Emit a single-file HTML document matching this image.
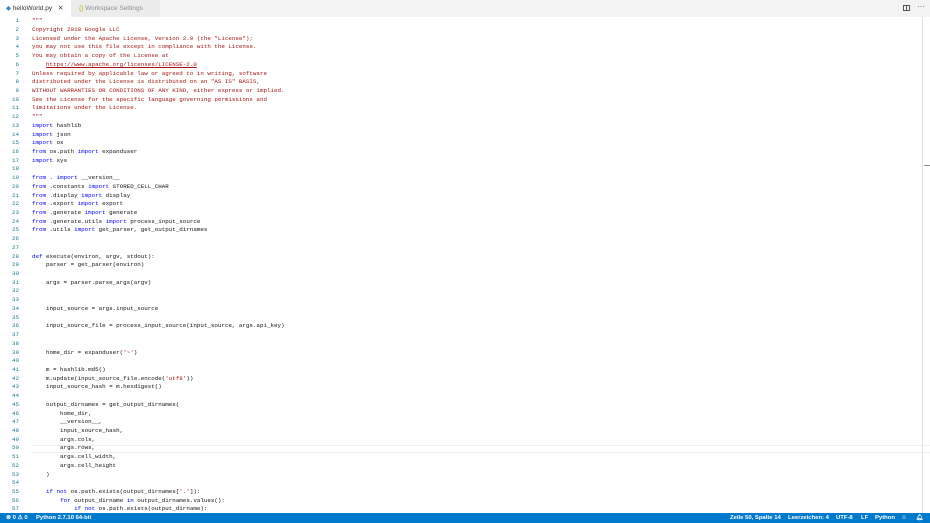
<!DOCTYPE html>
<html><head><meta charset="utf-8"><style>
*{margin:0;padding:0;box-sizing:border-box}
body{width:930px;height:523px;overflow:hidden;background:#fff;position:relative;font-family:"Liberation Sans",sans-serif}
#tabs{position:absolute;left:0;top:0;width:930px;height:17px;background:#f3f3f3}
.tab{position:absolute;top:0;height:17px;font-size:6.5px;line-height:17px}
#t1{left:0;width:71px;background:#fff;color:#333;padding-left:6px}
#t2{left:71px;width:89px;background:#ececec;color:#8e8e8e;padding-left:8px}
#ed{position:absolute;left:0;top:17.2px;font-family:"Liberation Mono",monospace;font-size:5.85px;line-height:8.73px;color:#111}
.l{height:8.73px;white-space:pre;position:relative}
.n{display:inline-block;width:19px;text-align:right;color:#237893;margin-right:13px}
.k{color:#0000ff}.s{color:#a31515}.u{color:#a31515;text-decoration:underline}
#sb{position:absolute;left:0;top:513px;width:930px;height:10px;background:#007acc;color:#fff;font-size:5.9px;line-height:10px;font-weight:bold}
</style></head><body>
<div id="tabs">
<div class="tab" id="t1"><span style="color:#3b88c3">◆</span> helloWorld.py <span style="margin-left:4px">✕</span></div>
<div class="tab" id="t2"><span style="color:#c9b400">{}</span> Workspace Settings</div>
<div style="position:absolute;left:903px;top:5px;width:7px;height:6px;border:1px solid #555;border-top-width:1.5px"></div>
<div style="position:absolute;left:906px;top:5px;width:1px;height:6px;background:#555"></div>
<div style="position:absolute;left:917px;top:2px;font-size:8px;color:#555">···</div>
</div>
<div style="position:absolute;left:922px;top:17px;width:1px;height:496px;background:#e0e0e0"></div>
<div style="position:absolute;left:924px;top:165px;width:6px;height:1px;background:#888"></div>
<div style="position:absolute;left:32px;top:444.6px;width:898px;height:8.7px;border-top:1px solid #eee;border-bottom:1px solid #eee"></div>
<div id="ed">
<div class="l"><span class="n">1</span><span class="s">"""</span></div>
<div class="l"><span class="n">2</span><span class="s">Copyright 2018 Google LLC</span></div>
<div class="l"><span class="n">3</span><span class="s">Licensed under the Apache License, Version 2.0 (the "License");</span></div>
<div class="l"><span class="n">4</span><span class="s">you may not use this file except in compliance with the License.</span></div>
<div class="l"><span class="n">5</span><span class="s">You may obtain a copy of the License at</span></div>
<div class="l"><span class="n">6</span><span class="s">    </span><span class="u">https://www.apache.org/licenses/LICENSE-2.0</span></div>
<div class="l"><span class="n">7</span><span class="s">Unless required by applicable law or agreed to in writing, software</span></div>
<div class="l"><span class="n">8</span><span class="s">distributed under the License is distributed on an "AS IS" BASIS,</span></div>
<div class="l"><span class="n">9</span><span class="s">WITHOUT WARRANTIES OR CONDITIONS OF ANY KIND, either express or implied.</span></div>
<div class="l"><span class="n">10</span><span class="s">See the License for the specific language governing permissions and</span></div>
<div class="l"><span class="n">11</span><span class="s">limitations under the License.</span></div>
<div class="l"><span class="n">12</span><span class="s">"""</span></div>
<div class="l"><span class="n">13</span><span class="k">import</span> hashlib</div>
<div class="l"><span class="n">14</span><span class="k">import</span> json</div>
<div class="l"><span class="n">15</span><span class="k">import</span> os</div>
<div class="l"><span class="n">16</span><span class="k">from</span> os.path <span class="k">import</span> expanduser</div>
<div class="l"><span class="n">17</span><span class="k">import</span> sys</div>
<div class="l"><span class="n">18</span></div>
<div class="l"><span class="n">19</span><span class="k">from</span> . <span class="k">import</span> __version__</div>
<div class="l"><span class="n">20</span><span class="k">from</span> .constants <span class="k">import</span> STORED_CELL_CHAR</div>
<div class="l"><span class="n">21</span><span class="k">from</span> .display <span class="k">import</span> display</div>
<div class="l"><span class="n">22</span><span class="k">from</span> .export <span class="k">import</span> export</div>
<div class="l"><span class="n">23</span><span class="k">from</span> .generate <span class="k">import</span> generate</div>
<div class="l"><span class="n">24</span><span class="k">from</span> .generate.utils <span class="k">import</span> process_input_source</div>
<div class="l"><span class="n">25</span><span class="k">from</span> .utils <span class="k">import</span> get_parser, get_output_dirnames</div>
<div class="l"><span class="n">26</span></div>
<div class="l"><span class="n">27</span></div>
<div class="l"><span class="n">28</span><span class="k">def</span> execute(environ, argv, stdout):</div>
<div class="l"><span class="n">29</span>    parser = get_parser(environ)</div>
<div class="l"><span class="n">30</span></div>
<div class="l"><span class="n">31</span>    args = parser.parse_args(argv)</div>
<div class="l"><span class="n">32</span></div>
<div class="l"><span class="n">33</span></div>
<div class="l"><span class="n">34</span>    input_source = args.input_source</div>
<div class="l"><span class="n">35</span></div>
<div class="l"><span class="n">36</span>    input_source_file = process_input_source(input_source, args.api_key)</div>
<div class="l"><span class="n">37</span></div>
<div class="l"><span class="n">38</span></div>
<div class="l"><span class="n">39</span>    home_dir = expanduser(<span class="s">'~'</span>)</div>
<div class="l"><span class="n">40</span></div>
<div class="l"><span class="n">41</span>    m = hashlib.md5()</div>
<div class="l"><span class="n">42</span>    m.update(input_source_file.encode(<span class="s">'utf8'</span>))</div>
<div class="l"><span class="n">43</span>    input_source_hash = m.hexdigest()</div>
<div class="l"><span class="n">44</span></div>
<div class="l"><span class="n">45</span>    output_dirnames = get_output_dirnames(</div>
<div class="l"><span class="n">46</span>        home_dir,</div>
<div class="l"><span class="n">47</span>        __version__,</div>
<div class="l"><span class="n">48</span>        input_source_hash,</div>
<div class="l"><span class="n">49</span>        args.cols,</div>
<div class="l"><span class="n">50</span>        args.rows,</div>
<div class="l"><span class="n">51</span>        args.cell_width,</div>
<div class="l"><span class="n">52</span>        args.cell_height</div>
<div class="l"><span class="n">53</span>    )</div>
<div class="l"><span class="n">54</span></div>
<div class="l"><span class="n">55</span>    <span class="k">if not</span> os.path.exists(output_dirnames[<span class="s">'.'</span>]):</div>
<div class="l"><span class="n">56</span>        <span class="k">for</span> output_dirname <span class="k">in</span> output_dirnames.values():</div>
<div class="l"><span class="n">57</span>            <span class="k">if not</span> os.path.exists(output_dirname):</div>
</div>
<div id="sb">
<span style="position:absolute;left:6px">⊗ 0 ⚠ 0</span>
<span style="position:absolute;left:36px">Python 2.7.10 64-bit</span>
<span style="position:absolute;left:730px">Zeile 50, Spalte 14</span>
<span style="position:absolute;left:788px">Leerzeichen: 4</span>
<span style="position:absolute;left:836px">UTF-8</span>
<span style="position:absolute;left:861px">LF</span>
<span style="position:absolute;left:875px">Python</span>
<span style="position:absolute;left:901px">☺</span>
<span style="position:absolute;left:916px">🔔︎</span>
</div>
</body></html>
